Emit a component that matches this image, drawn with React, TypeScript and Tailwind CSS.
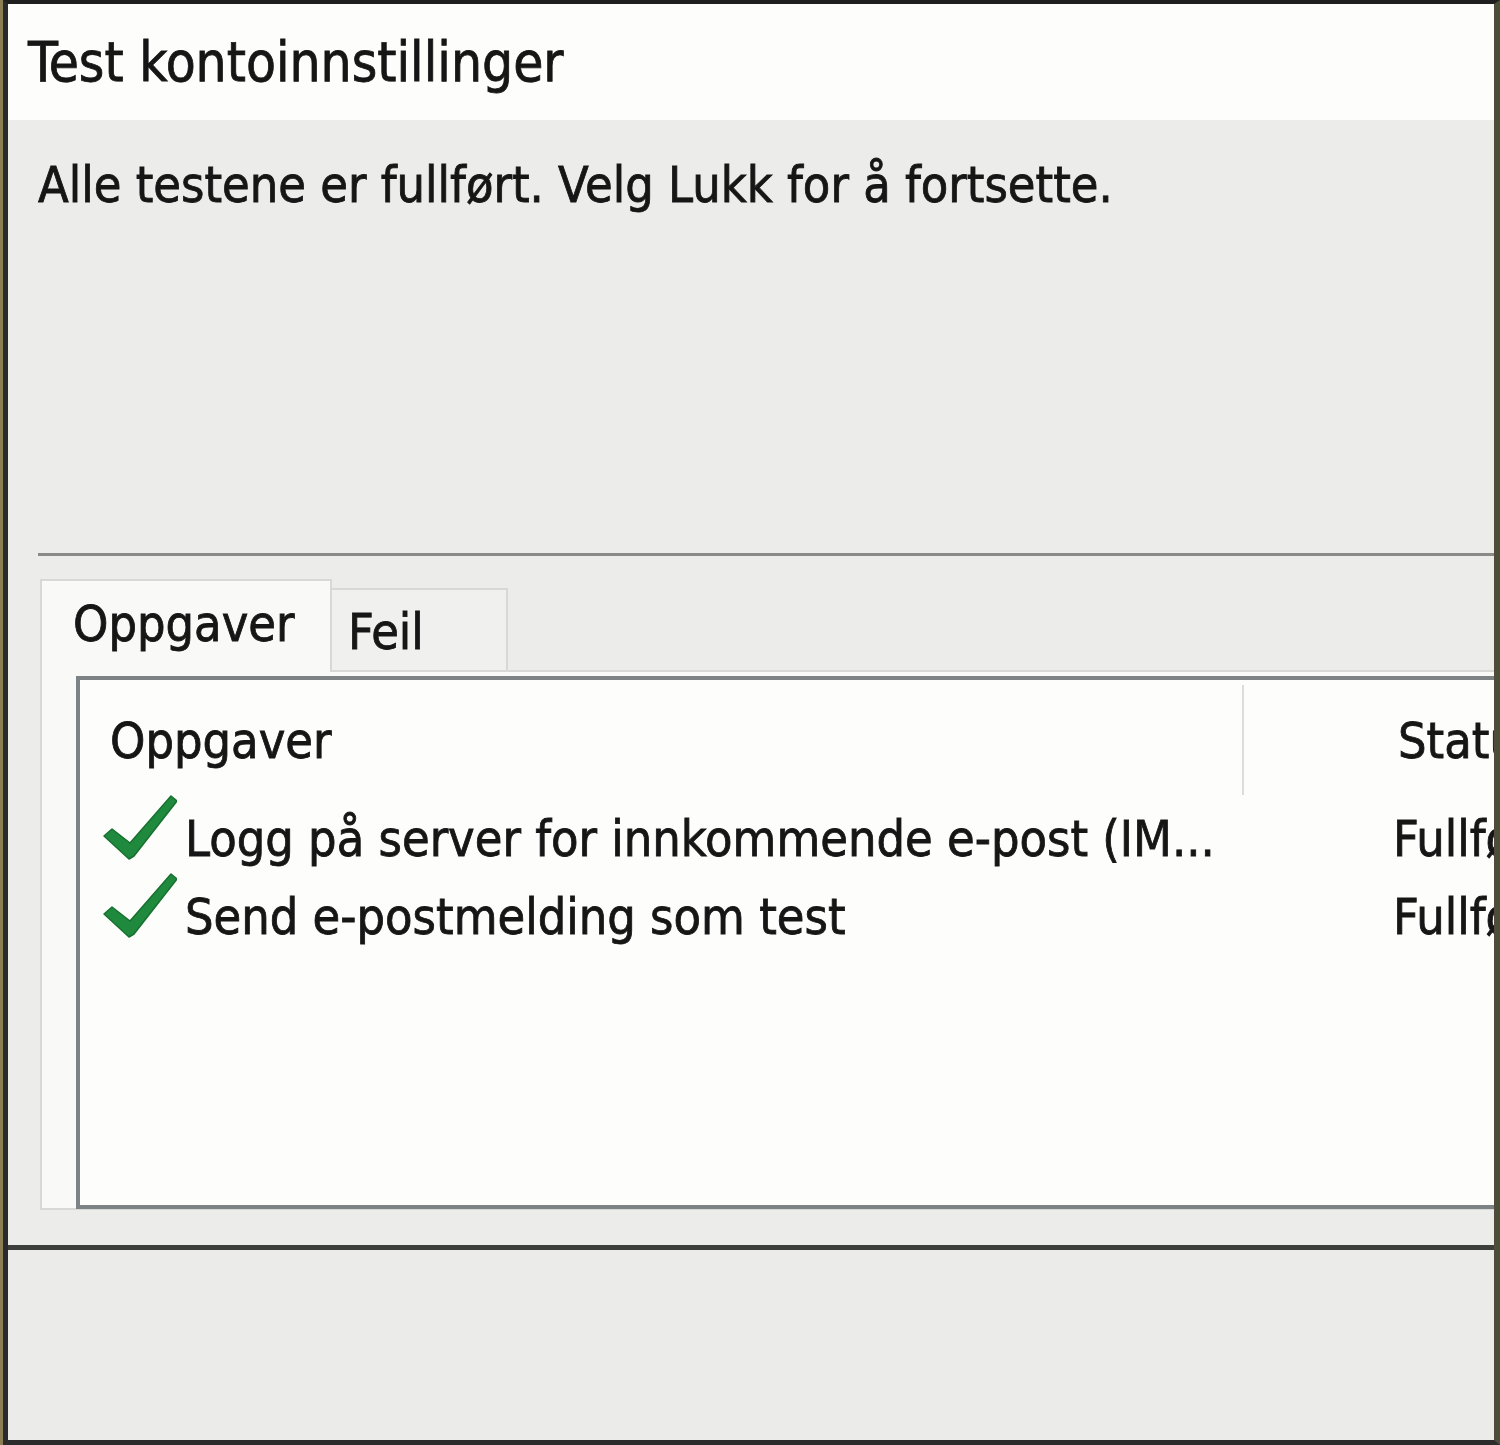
const font = "font-['DejaVu_Sans_Condensed','DejaVu_Sans',sans-serif] [-webkit-text-stroke:0.8px_#161616]";

function Check() {
  return (
    <svg width="74" height="65" viewBox="0 0 74 65" className="shrink-0">
      <path
        d="M1 41 L9 34 L27 48 L68 1 L74 6 L31 61 L26 64 Z"
        fill="#1f8a3d"
        stroke="#17702f"
        strokeWidth="1.5"
        strokeLinejoin="round"
      />
    </svg>
  );
}

const tasks = [
  { name: "Logg på server for innkommende e-post (IM...", status: "Fullført" },
  { name: "Send e-postmelding som test", status: "Fullført" },
];

export default function App() {
  return (
    <div className={`w-[1500px] h-[1445px] bg-[#8c7f53] pl-[3px] ${font}`}>
      <div className="h-full flex flex-col border-l-[5px] border-t-4 border-b-[5px] border-r-[6px] border-l-[#2b2b2b] border-t-[#1f1f1f] border-b-[#2c2c2c] border-r-[#4d4d3a] overflow-hidden">
        {/* title bar */}
        <div className="h-[116px] shrink-0 bg-[#fdfdfc] pl-[20px] pt-[31px]">
          <div className="text-[54.5px] leading-none text-[#161616]">Test kontoinnstillinger</div>
        </div>

        {/* body */}
        <div className="h-[1125px] shrink-0 bg-[#ececea] pt-[40px] pl-[30px] flex flex-col">
          <div className="text-[50px] leading-none text-[#161616] h-[50px]">
            Alle testene er fullført. Velg Lukk for å fortsette.
          </div>
          <div className="mt-[343px] h-[3px] bg-[#8a8a88]" />

          {/* tabs */}
          <div className="mt-[23px] h-[91px] flex items-end pl-[2px]">
            <div className="relative z-10 -mb-[2px] h-[93px] w-[292px] bg-[#f9f9f8] border-2 border-b-0 border-[#d8d8d6] pl-[31px] pt-[18px] text-[50px] leading-none text-[#161616]">
              Oppgaver
            </div>
            <div className="h-[82px] w-[176px] bg-[#f0f0ee] border-2 border-l-0 border-b-0 border-[#d8d8d6] pl-[16px] pt-[17px] text-[50px] leading-none text-[#161616]">
              Feil
            </div>
          </div>

          {/* tab panel */}
          <div className="h-[540px] ml-[2px] bg-[#f9f9f8] border-2 border-r-0 border-[#d8d8d6] pl-[34px] pt-[4px]">
            <div className="h-[533px] w-[1500px] bg-[#fdfdfc] border-4 border-[#7d8285]">
              {/* header */}
              <div className="h-[120px] flex">
                <div className="w-[1162px] pl-[30px] pt-[36px] text-[50px] leading-none text-[#161616]">Oppgaver</div>
                <div className="mt-[5px] h-[110px] w-[2px] bg-[#dcdcdc]" />
                <div className="pl-[154px] pt-[36px] text-[50px] leading-none text-[#161616] whitespace-nowrap">Status</div>
              </div>
              {/* rows */}
              {tasks.map((t) => (
                <div key={t.name} className="h-[78px] flex">
                  <div className="w-[1164px] flex pl-[23px] gap-[8px]">
                    <div className="-mt-[5px]">
                      <Check />
                    </div>
                    <div className="mt-[14px] text-[50px] leading-none text-[#161616] whitespace-nowrap">
                      {t.name}
                    </div>
                  </div>
                  <div className="pl-[149px] pt-[14px] text-[50px] leading-none text-[#161616] whitespace-nowrap">
                    {t.status}
                  </div>
                </div>
              ))}
            </div>
          </div>
        </div>

        {/* separator + bottom area */}
        <div className="h-[5px] shrink-0 bg-[#3c3f3c]" />
        <div className="flex-1 bg-[#ebebea]" />
      </div>
    </div>
  );
}
